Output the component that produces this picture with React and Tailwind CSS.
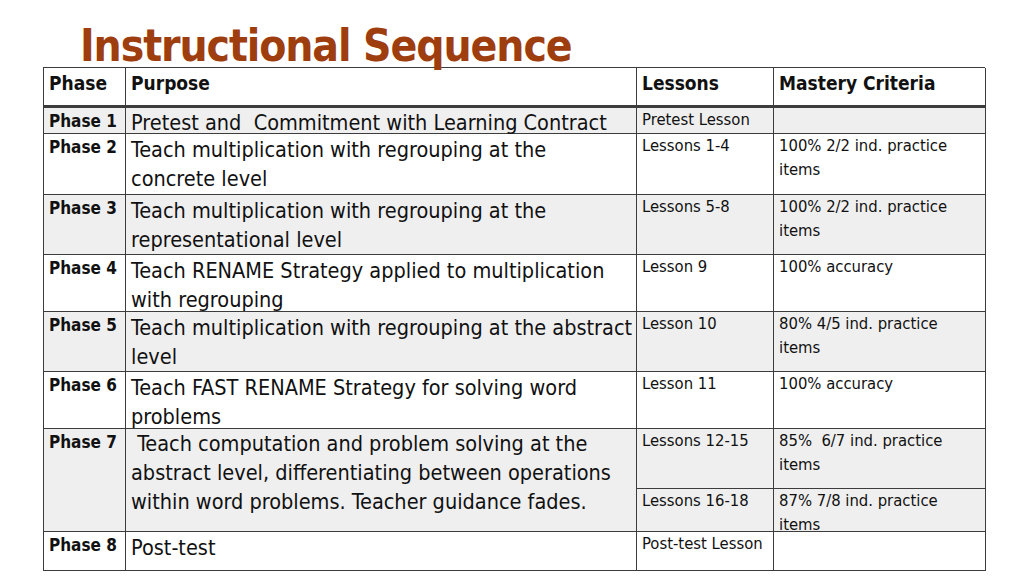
import React from "react";

const rows = [
  { phase: "Phase 1", purpose: ["Pretest and\u00a0 Commitment with Learning Contract"], lessons: "Pretest Lesson", mastery: [], h: "h-[26px]", gray: true, tight: true },
  { phase: "Phase 2", purpose: ["Teach multiplication with regrouping at the", "concrete level"], lessons: "Lessons 1-4", mastery: ["100% 2/2 ind. practice", "items"], h: "h-[61px]" },
  { phase: "Phase 3", purpose: ["Teach multiplication with regrouping at the", "representational level"], lessons: "Lessons 5-8", mastery: ["100% 2/2 ind. practice", "items"], h: "h-[60px]", gray: true },
  { phase: "Phase 4", purpose: ["Teach RENAME Strategy applied to multiplication", "with regrouping"], lessons: "Lesson 9", mastery: ["100% accuracy"], h: "h-[57px]" },
  { phase: "Phase 5", purpose: ["Teach multiplication with regrouping at the abstract", "level"], lessons: "Lesson 10", mastery: ["80% 4/5 ind. practice", "items"], h: "h-[60px]", gray: true },
  { phase: "Phase 6", purpose: ["Teach FAST RENAME Strategy for solving word", "problems"], lessons: "Lesson 11", mastery: ["100% accuracy"], h: "h-[57px]" },
];

const cell = "border-r-[1.5px] border-b-[1.5px] border-[#3c3c3c] px-[5px] overflow-visible whitespace-nowrap";
const phaseCls = `${cell} text-[17px] font-bold leading-[26px]`;
const purposeCls = `${cell} text-[21.5px] leading-[29px]`;
const lessonCls = `${cell} text-[16.5px] leading-[22px] pt-[1px]`;
const masteryCls = `${cell} text-[16.5px] leading-[24px]`;

function Lines({ lines }) {
  return lines.map((l, i) => <div key={i}>{l}</div>);
}

export default function App() {
  return (
    <div className="w-[1024px] h-[576px] bg-white font-['DejaVu_Sans_Condensed','DejaVu_Sans',sans-serif] text-[#111] overflow-hidden">
      <h1 className="pl-[80px] pt-[20px] h-[67px] text-[44px] leading-[52px] font-bold text-[#9e3d0e] tracking-[-1.1px]">
        Instructional Sequence
      </h1>
      <div className="ml-[43px] w-[942px] grid grid-cols-[82px_511px_137px_212px] border-l-[1.5px] border-t-[1.5px] border-[#3c3c3c]">
        {["Phase", "Purpose", "Lessons", "Mastery Criteria"].map((t) => (
          <div key={t} className={`${cell} h-[40px] border-b-[3px] text-[19px] font-bold leading-[28px] pt-[1px]`}>
            {t}
          </div>
        ))}

        {rows.map((r) => {
          const bg = r.gray ? "bg-[#efefef]" : "bg-white";
          return (
            <React.Fragment key={r.phase}>
              <div className={`${phaseCls} ${r.h} ${bg}`}>{r.phase}</div>
              <div className={`${purposeCls} ${r.h} ${bg} ${r.tight ? "leading-[25px]" : "pt-[1px]"}`}>
                <Lines lines={r.purpose} />
              </div>
              <div className={`${lessonCls} ${r.h} ${bg}`}>{r.lessons}</div>
              <div className={`${masteryCls} ${r.h} ${bg}`}>
                <Lines lines={r.mastery} />
              </div>
            </React.Fragment>
          );
        })}

        <div className={`${phaseCls} row-span-2 bg-[#efefef]`}>Phase 7</div>
        <div className={`${purposeCls} row-span-2 bg-[#efefef]`}>
          <Lines
            lines={[
              "\u00a0Teach computation and problem solving at the",
              "abstract level, differentiating between operations",
              "within word problems. Teacher guidance fades.",
            ]}
          />
        </div>
        <div className={`${lessonCls} h-[60px] bg-[#efefef]`}>Lessons 12-15</div>
        <div className={`${masteryCls} h-[60px] bg-[#efefef]`}>
          <Lines lines={["85%\u00a0 6/7 ind. practice", "items"]} />
        </div>
        <div className={`${lessonCls} h-[43px] bg-[#efefef]`}>Lessons 16-18</div>
        <div className={`${masteryCls} h-[43px] bg-[#efefef]`}>
          <Lines lines={["87% 7/8 ind. practice", "items"]} />
        </div>

        <div className={`${phaseCls} h-[39px] bg-white`}>Phase 8</div>
        <div className={`${purposeCls} h-[39px] bg-white pt-[1px]`}>Post-test</div>
        <div className={`${lessonCls} h-[39px] bg-white`}>Post-test Lesson</div>
        <div className={`${masteryCls} h-[39px] bg-white`}></div>
      </div>
    </div>
  );
}
